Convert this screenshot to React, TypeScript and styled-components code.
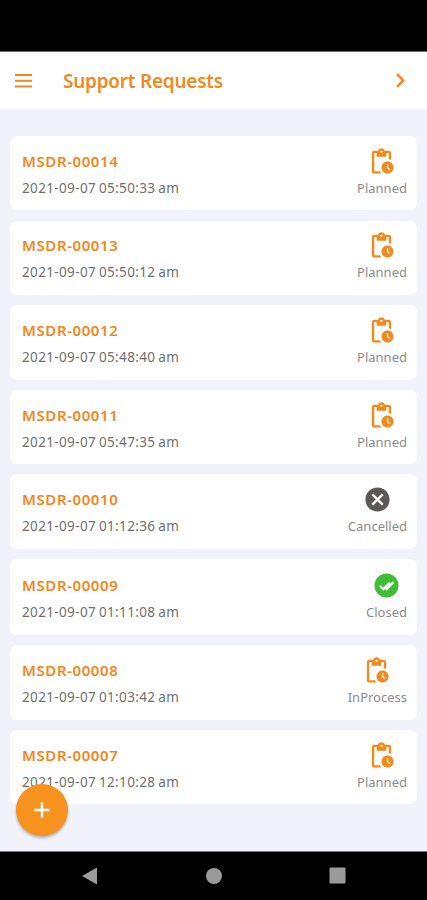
import React from 'react';
import styled, { createGlobalStyle } from 'styled-components';
import { MdPendingActions, MdCancel } from 'react-icons/md';

const GlobalStyle = createGlobalStyle`
  * { box-sizing: border-box; }
  body { margin: 0; background: #000; font-family: "Noto Sans", "Open Sans", sans-serif; }
`;

const Screen = styled.div`
  position: relative;
  width: 427px;
  height: 900px;
  display: flex;
  flex-direction: column;
  overflow: hidden;
  background: #f2f2fb;
`;

const StatusBar = styled.div`
  height: 52px;
  background: #000;
  border-bottom: 1px solid #6c6c6c;
  flex: none;
`;

const Header = styled.header`
  flex: none;
  height: 57px;
  padding: 0 20px 0 15px;
  display: flex;
  align-items: center;
  background: #fff;
  color: #f08a1e;
`;

const Title = styled.h1`
  flex: 1;
  margin: 0 0 0 31px;
  font-size: 19px;
  line-height: 28px;
  font-weight: 600;
  letter-spacing: -0.25px;
  white-space: nowrap;
`;

const List = styled.main`
  flex: 1;
  padding: 27px 10px 0;
`;

const Card = styled.article<{ $height: number; $gap: number }>`
  display: flex;
  justify-content: space-between;
  align-items: center;
  height: ${(p) => p.$height}px;
  margin-bottom: ${(p) => p.$gap}px;
  padding: 0 10px 1.2px 12px;
  border-radius: 7px;
  background: #fff;
`;

const Details = styled.div`
  padding-top: 4px;
`;

const RequestId = styled.div`
  font-size: 15px;
  line-height: 21px;
  font-weight: 600;
  letter-spacing: 0.58px;
  color: #f5861a;
  white-space: nowrap;
`;

const Timestamp = styled.div`
  margin-top: 6px;
  font-size: 13.5px;
  line-height: 21px;
  letter-spacing: 0.36px;
  word-spacing: -1px;
  color: #707070;
  white-space: nowrap;
`;

const Status = styled.div`
  display: flex;
  flex-direction: column;
  align-items: center;
  color: #f08a1e;
`;

const IconSlot = styled.div<{ $shift: number }>`
  display: flex;
  height: 29px;
  margin-left: ${(p) => p.$shift}px;
`;

const StatusLabel = styled.span`
  margin-top: 2px;
  font-size: 13px;
  line-height: 21px;
  color: #8c8c8c;
`;

const AddButton = styled.button`
  position: absolute;
  left: 16px;
  top: 784px;
  width: 52px;
  height: 52px;
  display: flex;
  align-items: center;
  justify-content: center;
  padding: 0 0 1px;
  border: 0;
  border-radius: 50%;
  background: #f6921e;
  box-shadow: 0 2px 3px rgba(0, 0, 0, 0.28);
`;

const NavBar = styled.nav`
  flex: none;
  height: 49px;
  padding: 0 81px 1px;
  display: flex;
  align-items: center;
  justify-content: space-between;
  background: #000;
  border-top: 1px solid #777;
`;

type Kind = 'Planned' | 'Cancelled' | 'Closed' | 'InProcess';

const requests: { id: string; time: string; status: Kind; height: number; gap: number }[] = [
  { id: 'MSDR-00014', time: '2021-09-07 05:50:33 am', status: 'Planned', height: 74.2, gap: 10.5 },
  { id: 'MSDR-00013', time: '2021-09-07 05:50:12 am', status: 'Planned', height: 74.2, gap: 10.5 },
  { id: 'MSDR-00012', time: '2021-09-07 05:48:40 am', status: 'Planned', height: 74.2, gap: 10.5 },
  { id: 'MSDR-00011', time: '2021-09-07 05:47:35 am', status: 'Planned', height: 74.2, gap: 10 },
  { id: 'MSDR-00010', time: '2021-09-07 01:12:36 am', status: 'Cancelled', height: 74.4, gap: 10.3 },
  { id: 'MSDR-00009', time: '2021-09-07 01:11:08 am', status: 'Closed', height: 76.4, gap: 10 },
  { id: 'MSDR-00008', time: '2021-09-07 01:03:42 am', status: 'InProcess', height: 74.4, gap: 10.4 },
  { id: 'MSDR-00007', time: '2021-09-07 12:10:28 am', status: 'Planned', height: 74.2, gap: 0 },
];

function StatusIcon({ status }: { status: Kind }) {
  if (status === 'Cancelled') return <MdCancel size={29} color="#5c5858" />;
  if (status === 'Closed') {
    return (
      <svg width="29" height="29" viewBox="0 0 29 29" fill="none">
        <circle cx="14.5" cy="14.5" r="12" fill="#3fbe35" />
        <path
          d="M7.8 14.8l3.5 3.4 6.4-6.4M12.4 15.8l2.3 2.4 6.6-7"
          stroke="#fff"
          strokeWidth="2.3"
        />
      </svg>
    );
  }
  return <MdPendingActions size={29} />;
}

export default function App() {
  return (
    <Screen>
      <GlobalStyle />
      <StatusBar />
      <Header>
        <svg width="17" height="14" viewBox="0 0 17 14" stroke="currentColor" strokeWidth="2">
          <path d="M0 1h17M0 6.7h17M0 12.5h17" />
        </svg>
        <Title>Support Requests</Title>
        <svg width="14" height="16" viewBox="0 0 14 16" fill="none" stroke="currentColor" strokeWidth="2.5">
          <path d="M4 1.2l6.2 6.3L4 13.8" />
        </svg>
      </Header>
      <List>
        {requests.map((r) => (
          <Card key={r.id} $height={r.height} $gap={r.gap}>
            <Details>
              <RequestId>{r.id}</RequestId>
              <Timestamp>{r.time}</Timestamp>
            </Details>
            <Status>
              <IconSlot $shift={r.status === 'Cancelled' || r.status === 'Closed' ? 0 : -2}>
                <StatusIcon status={r.status} />
              </IconSlot>
              <StatusLabel>{r.status}</StatusLabel>
            </Status>
          </Card>
        ))}
      </List>
      <AddButton aria-label="Add request">
        <svg width="16" height="16" viewBox="0 0 16 16" stroke="#fff" strokeWidth="2.4">
          <path d="M8 0.5v15M0.5 8h15" />
        </svg>
      </AddButton>
      <NavBar>
        <svg width="17" height="18" viewBox="0 0 17 18">
          <path d="M16 0.5v17L1 9z" fill="#9b9b9b" />
        </svg>
        <svg width="16" height="16" viewBox="0 0 16 16">
          <circle cx="8" cy="8" r="8" fill="#9b9b9b" />
        </svg>
        <svg width="17" height="17" viewBox="0 0 17 17">
          <rect x="0.5" y="0.5" width="16" height="16" rx="1" fill="#9b9b9b" />
        </svg>
      </NavBar>
    </Screen>
  );
}
